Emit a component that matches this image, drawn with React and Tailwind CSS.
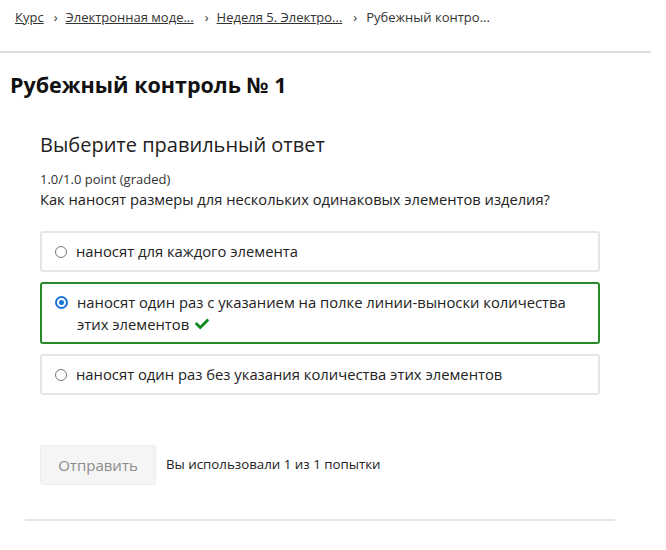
import React from 'react';

function Radio({ checked }) {
  if (checked) {
    return (
      <span className="mt-[5px] flex h-[13px] w-[13px] shrink-0 items-center justify-center rounded-full border-2 border-[#1a73d9]">
        <span className="h-[5px] w-[5px] rounded-full bg-[#1a73d9]" />
      </span>
    );
  }
  return <span className="mt-[5.5px] h-[12px] w-[12px] shrink-0 rounded-full border-[1.5px] border-[#777]" />;
}

function Check() {
  return (
    <svg viewBox="0 0 512 512" className="ml-[6px] inline-block h-[14px] w-[14px] align-[-1px]" fill="#0d8a1a">
      <path d="M173.9 439.4l-166.4-166.4c-10-10-10-26.2 0-36.2l36.2-36.2c10-10 26.2-10 36.2 0L192 312.7 432.1 72.6c10-10 26.2-10 36.2 0l36.2 36.2c10 10 10 26.2 0 36.2l-294.4 294.4c-10 10-26.2 10-36.2 0z" />
    </svg>
  );
}

const options = [
  { text: 'наносят для каждого элемента' },
  { text: 'наносят один раз с указанием на полке линии-выноски количества этих элементов', correct: true },
  { text: 'наносят один раз без указания количества этих элементов' },
];

export default function App() {
  return (
    <div className="min-h-[550px] w-[666px] bg-white text-[#222]" style={{ fontFamily: '"Open Sans", "Noto Sans", sans-serif' }}>
      <nav className="flex h-[51px] items-start gap-[8px] px-[15px] pt-[8px] text-[13px] leading-[18px] text-[#333]">
        <span className="underline">Курс</span>
        <span className="ml-[2px]">›</span>
        <span className="underline">Электронная моде...</span>
        <span className="ml-[3px]">›</span>
        <span className="underline">Неделя 5. Электро...</span>
        <span className="ml-[3px]">›</span>
        <span className="ml-[1px]">Рубежный контро...</span>
      </nav>
      <div className="mr-[15px] border-b-2 border-[#dedede]" />

      <h1 className="pl-[10px] pt-[18px] text-[21.5px] font-bold leading-[28px] text-[#111]">Рубежный контроль № 1</h1>

      <div className="pl-[40px] pr-[66px]">
        <h2 className="mt-[33px] text-[20px] leading-[26px] text-[#222]">Выберите правильный ответ</h2>
        <div className="mt-[12px] text-[13px] leading-[19px] text-[#333]">1.0/1.0 point (graded)</div>
        <div className="text-[14.7px] leading-[20px] text-[#222]">Как наносят размеры для нескольких одинаковых элементов изделия?</div>

        <div className="mt-[22px] flex flex-col gap-[10px]">
          {options.map((o, i) => (
            <div
              key={i}
              className={
                'flex gap-[9px] rounded-[3px] border-2 py-[7px] pl-[13px] pr-[20px] text-[14.8px] text-[#222] ' +
                (o.correct ? 'border-[#2a8a2a] leading-[22px]' : 'border-[#e6e6e6] leading-[23px]')
              }
            >
              <Radio checked={o.correct} />
              <span>
                {o.text}
                {o.correct && <Check />}
              </span>
            </div>
          ))}
        </div>

        <div className="mt-[50px] flex items-center gap-[10px]">
          <button className="h-[40px] w-[116px] rounded-[3px] border border-[#ececec] bg-[#f5f5f5] text-[15px] text-[#8c8c8c]">
            Отправить
          </button>
          <span className="text-[13.3px] text-[#222]">Вы использовали 1 из 1 попытки</span>
        </div>
      </div>

      <div className="ml-[25px] mt-[34px] w-[590px] border-b-2 border-[#e6e6e6]" />
    </div>
  );
}
